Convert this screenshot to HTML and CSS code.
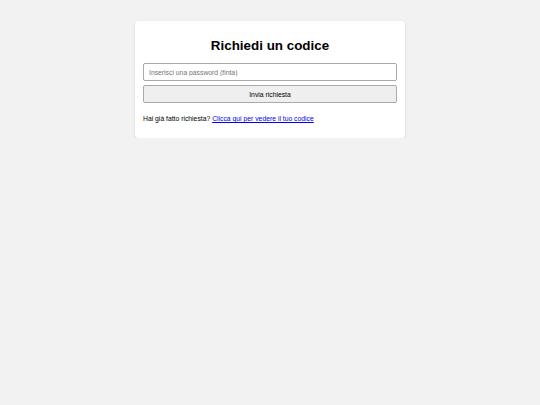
FILE: index.html
```html
<!DOCTYPE html>
<html lang="it">
<head>
<meta charset="utf-8">
<link rel="stylesheet" href="styles.css">
</head>
<body>
<div class="card">
  <h1 class="title">Richiedi un codice</h1>
  <form class="form">
    <input class="field" type="password" placeholder="Inserisci una password (finta)">
    <button class="btn" type="button">Invia richiesta</button>
  </form>
  <p class="note">Hai già fatto richiesta? <a class="link" href="#">Clicca qui per vedere il tuo codice</a></p>
</div>
</body>
</html>
```

FILE: styles.css
```css
html, body { margin: 0; padding: 0; }
body {
  background: #f2f2f2;
  font-family: "Liberation Sans", Arial, sans-serif;
  color: #000;
}
.card {
  width: 254px;
  margin: 21px auto 0;
  padding: 16px 8px 15px;
  background: #fff;
  border-radius: 4px;
  box-shadow: 0 1px 3px rgba(0,0,0,0.12);
}
.title {
  margin: 0 0 8px;
  font-size: 13.4px;
  line-height: 18px;
  text-align: center;
  font-weight: bold;
}
.form { display: flex; flex-direction: column; gap: 4px; }
.field {
  box-sizing: border-box;
  height: 18px;
  width: 100%;
  margin: 0;
  padding: 0 5px;
  border: 1px solid #a9a9a9;
  border-radius: 2px;
  font: 6.8px "Liberation Sans", Arial, sans-serif;
}
.field::placeholder { color: #757575; }
.btn {
  box-sizing: border-box;
  height: 18px;
  width: 100%;
  margin: 0;
  padding: 0;
  border: 1px solid #a9a9a9;
  border-radius: 2px;
  background: #efefef;
  font: 6.8px "Liberation Sans", Arial, sans-serif;
  color: #000;
}
.note {
  margin: 11px 0 0;
  font-size: 6.8px;
  line-height: 9px;
}
.link { color: #0000ee; }
```
